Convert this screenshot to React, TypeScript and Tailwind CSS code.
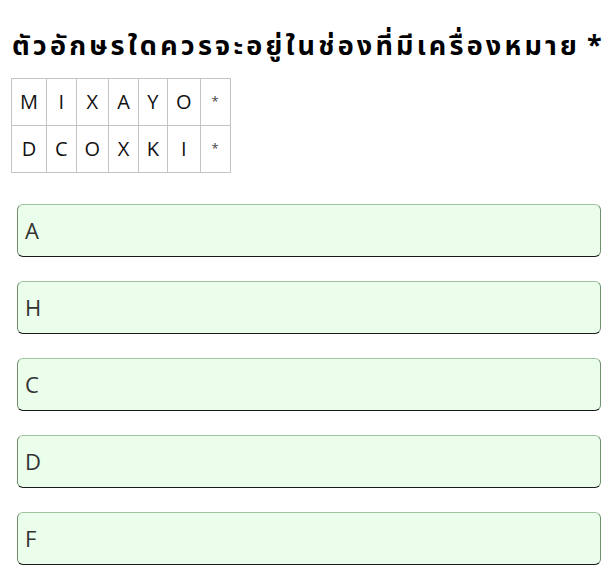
import React from "react";

const rows = [
  ["M", "I", "X", "A", "Y", "O", "*"],
  ["D", "C", "O", "X", "K", "I", "*"],
];
const options = ["A", "H", "C", "D", "F"];

export default function App() {
  return (
    <div className="w-[603px] h-[574px] bg-white overflow-hidden" style={{ fontFamily: "'Open Sans', 'Noto Sans', Tahoma, sans-serif" }}>
      <h1 className="pl-[12px] pt-[31px] text-[27px] font-bold leading-[32px] text-black whitespace-nowrap" style={{ fontFamily: "Tahoma, 'Noto Sans Thai', 'DejaVu Sans', sans-serif" }}>
        <span className="tracking-[3.2px]">ตัวอักษรใดควรจะอยู่ในช่องที่มีเครื่องหมาย</span> *
      </h1>
      <table className="ml-[11px] mt-[15px] border-collapse">
        <tbody>
          {rows.map((r, i) => (
            <tr key={i}>
              {r.map((c, j) => (
                <td
                  key={j}
                  className={`border border-[#c4c4c4] h-[47px] text-center text-[#111] ${c === "*" ? "w-[30px] text-[13px] text-[#444]" : "text-[20px] px-[8px]"}`}
                >
                  {c}
                </td>
              ))}
            </tr>
          ))}
        </tbody>
      </table>
      <div className="ml-[17px] mt-[31px] w-[584px] flex flex-col gap-[24px]">
        {options.map((o) => (
          <div
            key={o}
            className="h-[53px] rounded-[6px] border border-[#9fc39f] border-b-[#1a1a1a] border-l-[#6f8f6f] border-r-[#6f8f6f] bg-[#ebfdeb] flex items-center pl-[7px] text-[22px] text-[#333]"
          >
            {o}
          </div>
        ))}
      </div>
    </div>
  );
}
